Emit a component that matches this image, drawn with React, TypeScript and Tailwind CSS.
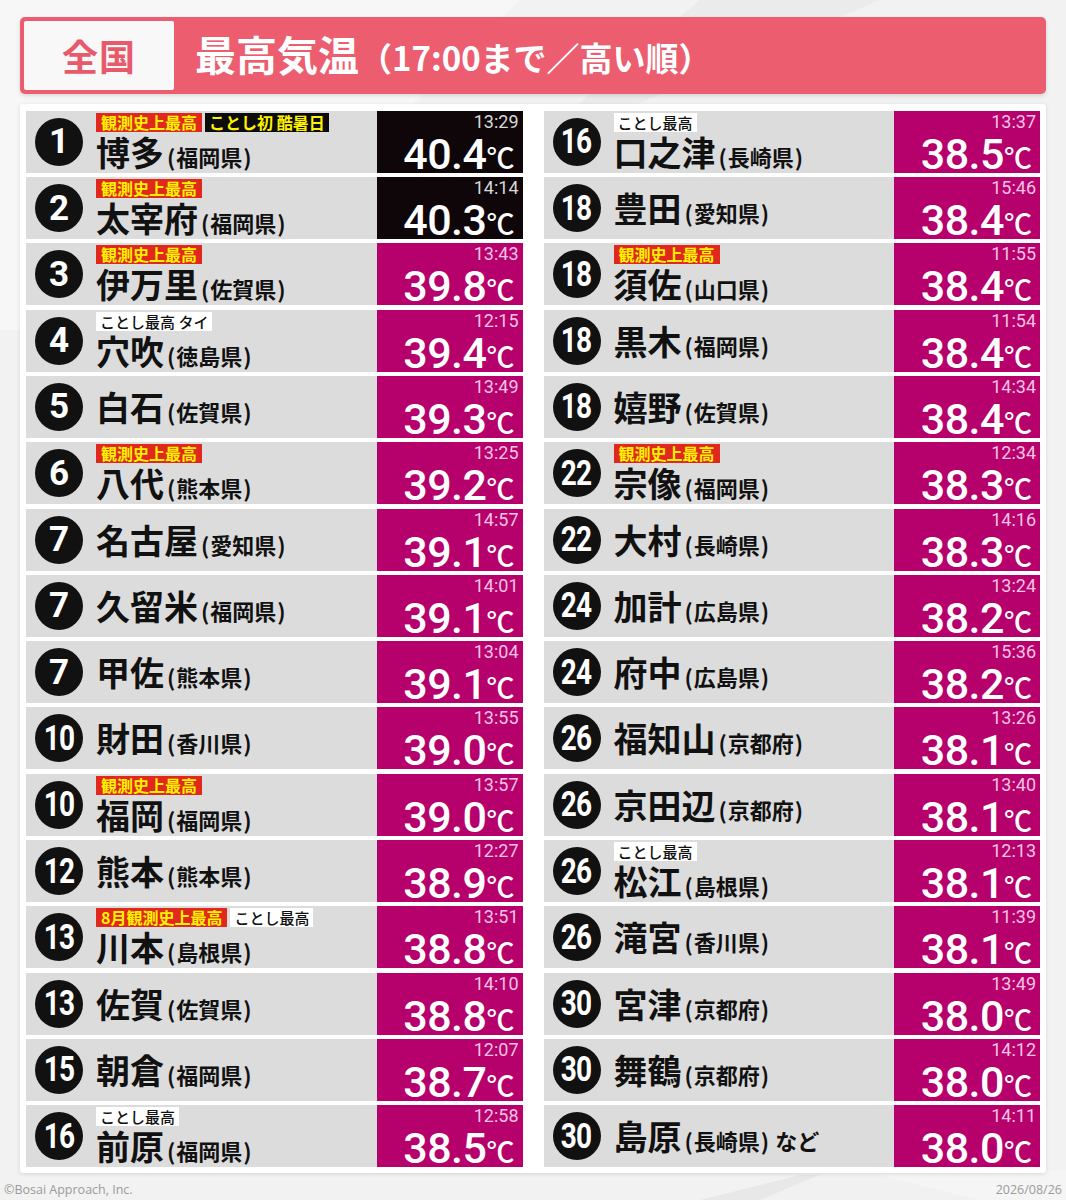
import React from "react";

type Badge = { t: string; k: "red" | "black" | "white" };
type Row = { r: number; n: string; p: string; time: string; temp: string; b?: Badge[]; dark?: boolean; suf?: string };

const R = (t = "観測史上最高"): Badge => ({ t, k: "red" });
const W = (t = "ことし最高"): Badge => ({ t, k: "white" });

const left: Row[] = [
  { r: 1, n: "博多", p: "福岡県", time: "13:29", temp: "40.4", dark: true, b: [R(), { t: "ことし初 酷暑日", k: "black" }] },
  { r: 2, n: "太宰府", p: "福岡県", time: "14:14", temp: "40.3", dark: true, b: [R()] },
  { r: 3, n: "伊万里", p: "佐賀県", time: "13:43", temp: "39.8", b: [R()] },
  { r: 4, n: "穴吹", p: "徳島県", time: "12:15", temp: "39.4", b: [W("ことし最高 タイ")] },
  { r: 5, n: "白石", p: "佐賀県", time: "13:49", temp: "39.3" },
  { r: 6, n: "八代", p: "熊本県", time: "13:25", temp: "39.2", b: [R()] },
  { r: 7, n: "名古屋", p: "愛知県", time: "14:57", temp: "39.1" },
  { r: 7, n: "久留米", p: "福岡県", time: "14:01", temp: "39.1" },
  { r: 7, n: "甲佐", p: "熊本県", time: "13:04", temp: "39.1" },
  { r: 10, n: "財田", p: "香川県", time: "13:55", temp: "39.0" },
  { r: 10, n: "福岡", p: "福岡県", time: "13:57", temp: "39.0", b: [R()] },
  { r: 12, n: "熊本", p: "熊本県", time: "12:27", temp: "38.9" },
  { r: 13, n: "川本", p: "島根県", time: "13:51", temp: "38.8", b: [R("8月観測史上最高"), W()] },
  { r: 13, n: "佐賀", p: "佐賀県", time: "14:10", temp: "38.8" },
  { r: 15, n: "朝倉", p: "福岡県", time: "12:07", temp: "38.7" },
  { r: 16, n: "前原", p: "福岡県", time: "12:58", temp: "38.5", b: [W()] },
];

const right: Row[] = [
  { r: 16, n: "口之津", p: "長崎県", time: "13:37", temp: "38.5", b: [W()] },
  { r: 18, n: "豊田", p: "愛知県", time: "15:46", temp: "38.4" },
  { r: 18, n: "須佐", p: "山口県", time: "11:55", temp: "38.4", b: [R()] },
  { r: 18, n: "黒木", p: "福岡県", time: "11:54", temp: "38.4" },
  { r: 18, n: "嬉野", p: "佐賀県", time: "14:34", temp: "38.4" },
  { r: 22, n: "宗像", p: "福岡県", time: "12:34", temp: "38.3", b: [R()] },
  { r: 22, n: "大村", p: "長崎県", time: "14:16", temp: "38.3" },
  { r: 24, n: "加計", p: "広島県", time: "13:24", temp: "38.2" },
  { r: 24, n: "府中", p: "広島県", time: "15:36", temp: "38.2" },
  { r: 26, n: "福知山", p: "京都府", time: "13:26", temp: "38.1" },
  { r: 26, n: "京田辺", p: "京都府", time: "13:40", temp: "38.1" },
  { r: 26, n: "松江", p: "島根県", time: "12:13", temp: "38.1", b: [W()] },
  { r: 26, n: "滝宮", p: "香川県", time: "11:39", temp: "38.1" },
  { r: 30, n: "宮津", p: "京都府", time: "13:49", temp: "38.0" },
  { r: 30, n: "舞鶴", p: "京都府", time: "14:12", temp: "38.0" },
  { r: 30, n: "島原", p: "長崎県", time: "14:11", temp: "38.0", suf: "など" },
];

const JP = "font-['Noto_Sans_CJK_JP','Noto_Sans',sans-serif]";
const RB = "font-['Roboto','Liberation_Sans',sans-serif]";

function BadgeEl({ b }: { b: Badge }) {
  const cls =
    b.k === "red"
      ? "bg-[#e0281c] text-[#fff200] font-bold text-[16px] px-[5px]"
      : b.k === "black"
      ? "bg-[#0c0c0c] text-[#fff200] font-bold text-[16px] px-[4px]"
      : "bg-white text-[#111] font-medium text-[15px] px-[4px]";
  return <span className={`${cls} ${JP} leading-[19px] h-[19px] whitespace-pre`}>{b.t}</span>;
}

function Num({ r }: { r: number }) {
  const two = r >= 10;
  return (
    <div className="w-[48px] h-[48px] rounded-full bg-[#111] flex items-center justify-center shrink-0">
      <span
        className={`${RB} text-white font-bold text-[35px] leading-none ${two ? "scale-x-[0.8] tracking-[-1px]" : ""}`}
      >
        {r}
      </span>
    </div>
  );
}

function RowEl({ d }: { d: Row }) {
  return (
    <div className="h-[62px] bg-[#dcdcdc] flex">
      <div className="flex items-center pl-[9px] flex-1">
        <Num r={d.r} />
        <div className={`ml-[13px] flex flex-col ${d.b ? "self-start pt-[2px]" : ""}`}>
          {d.b && (
            <div className="flex gap-[3px] h-[19px]">
              {d.b.map((b, i) => (
                <BadgeEl key={i} b={b} />
              ))}
            </div>
          )}
          <div className={`${JP} text-[#111] font-bold flex items-baseline h-[40px] leading-[40px] whitespace-nowrap`}>
            <span className="text-[34px]">{d.n}</span>
            <span className="text-[22px] ml-[3px]">
              (<span className="mx-[1px]">{d.p}</span>)
            </span>
            {d.suf && <span className="text-[22px] ml-[6px]">{d.suf}</span>}
          </div>
        </div>
      </div>
      <div
        className={`w-[146px] shrink-0 flex flex-col items-end pr-[8px] ${d.dark ? "bg-[#0e0609]" : "bg-[#b6006b]"}`}
      >
        <div
          className={`${RB} text-[18px] leading-[18px] mt-[2px] -mr-[4px] ${d.dark ? "text-[#d8d8d8]" : "text-[#f6c4e2]"}`}
        >
          {d.time}
        </div>
        <div className="flex items-baseline mt-[3px] h-[40px] leading-[40px] text-white">
          <span className={`${RB} font-medium text-[43px] tracking-[-0.5px]`}>{d.temp}</span>
          <span className={`${JP} text-[28px] font-medium`}>℃</span>
        </div>
      </div>
    </div>
  );
}

export default function App() {
  return (
    <div className="w-[1066px] h-[1200px] bg-[#f2f2f2] relative overflow-hidden flex flex-col">
      <svg className="absolute inset-0 pointer-events-none" width="1066" height="1200" viewBox="0 0 1066 1200">
        <polygon points="0,0 520,0 180,330 0,330" fill="#f7f7f7" />
        <polygon points="700,0 880,0 600,120 560,120" fill="#ebebeb" />
        <polygon points="700,1200 800,1175 880,1175 980,1200" fill="#e8e8e8" />
        <polygon points="760,1200 830,1170 1066,1170 1066,1200" fill="#f6f6f6" opacity="0.6" />
      </svg>
      <div className="relative mx-[20px] mt-[17px] h-[77px] rounded-[5px] bg-[#ec5e6f] flex items-center p-[4px] shadow-[0_2px_4px_rgba(0,0,0,0.12)]">
        <div className="w-[150px] h-full bg-[#f8f8f8] rounded-[2px] flex items-center justify-center">
          <span className={`${JP} font-bold text-[36px] text-[#e85a6b] tracking-[1px]`}>全国</span>
        </div>
        <div className={`${JP} font-bold text-white ml-[21px] flex items-baseline -mt-[4px]`}>
          <span className="text-[41px]">最高気温</span>
          <span className="text-[33px]">（17:00まで／高い順）</span>
        </div>
      </div>
      <div className="relative mx-[20px] mt-[10px] bg-white px-[6px] pt-[7px] pb-[6px] grid grid-cols-2 gap-x-[21px] shadow-[0_1px_4px_rgba(0,0,0,0.12)] rounded-[3px]">
        <div className="flex flex-col gap-[4.3px]">
          {left.map((d, i) => (
            <RowEl key={i} d={d} />
          ))}
        </div>
        <div className="flex flex-col gap-[4.3px]">
          {right.map((d, i) => (
            <RowEl key={i} d={d} />
          ))}
        </div>
      </div>
      <div className="relative flex justify-between px-[4px] mt-[8px] text-[12.5px] text-[#9a9a9a] font-['Open_Sans','Noto_Sans',sans-serif]">
        <span>©Bosai Approach, Inc.</span>
        <span>2026/08/26</span>
      </div>
    </div>
  );
}
